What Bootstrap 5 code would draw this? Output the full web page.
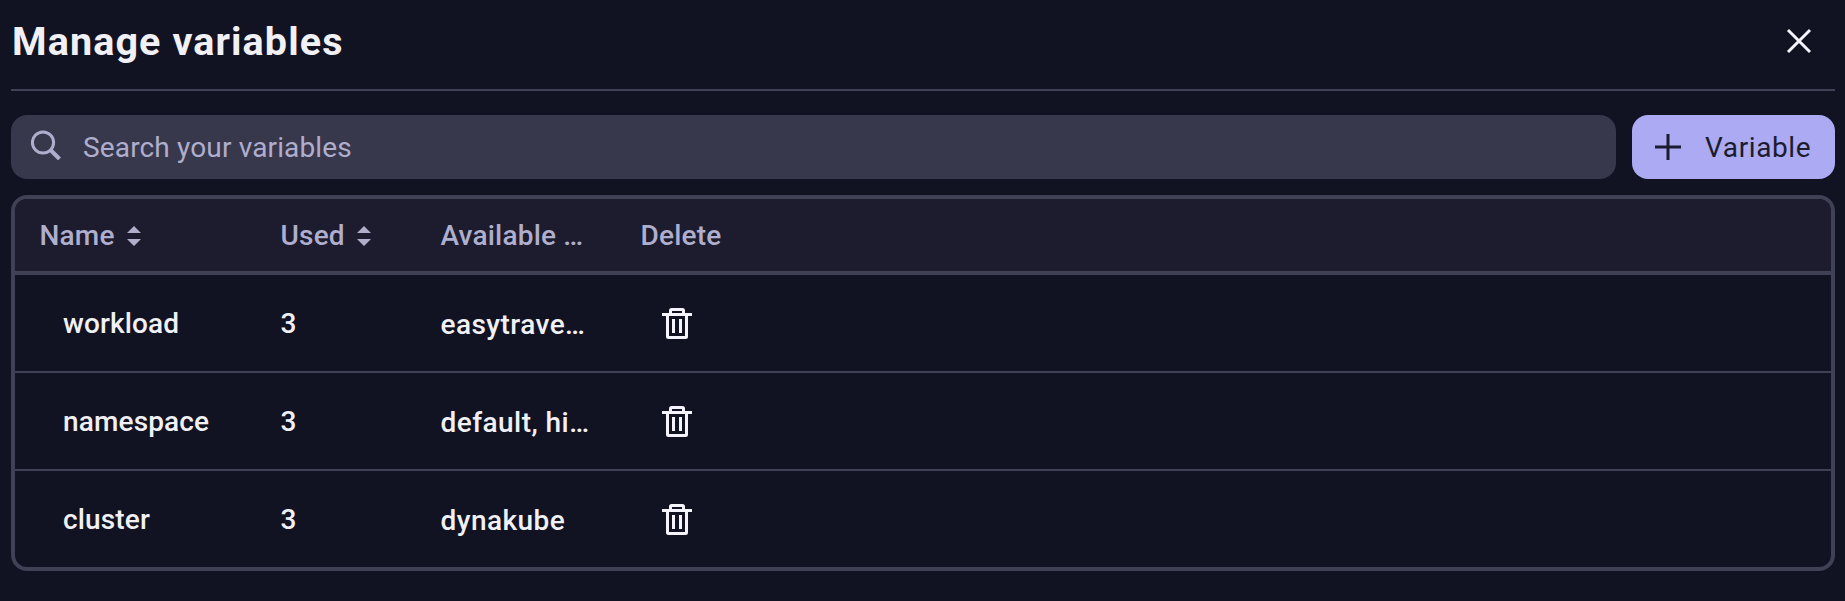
<!doctype html>
<html lang="en" data-bs-theme="dark">
<head>
<meta charset="utf-8">
<meta name="viewport" content="width=device-width, initial-scale=1">
<title>Manage variables</title>
<link href="https://cdn.jsdelivr.net/npm/bootstrap@5.3.0/dist/css/bootstrap.min.css" rel="stylesheet">
<style>
  body { background: #111222; color: #f0f0f5; font-family: Roboto, sans-serif; font-size: 28px; line-height: 36px; overflow: hidden; }
  svg { display: block; flex: none; }
  .panel { padding: 0 10px 0 11px; }
  .panel-head { height: 91px; border-bottom: 2px solid #414155; padding: 0 23px 7px 0; }
  .panel-head h1 { color: #f0f0f5; font-size: 39.5px; line-height: 48px; letter-spacing: 1.1px; padding: 2px 0 0 1px; }
  .toolbar { padding: 24px 0 16px; }
  .search { height: 64px; border-radius: 16px; background: #38384c; padding: 0 20px; }
  .search input { color: #b0aecd; font-size: 28px; line-height: 36px; margin: 1px 0 0 22px; letter-spacing: .15px; box-shadow: none; outline: 0; }
  .search input::placeholder { color: #b0aecd; opacity: 1; }
  .btn-add, .btn-add:hover { width: 203px; height: 64px; border-radius: 16px; background: #abaaf2; color: #1b1c2e; font-size: 28px; line-height: 36px; padding: 0 0 0 20px; letter-spacing: .6px; border: 0; }
  .btn-add span { margin: 1px 0 0 21px; }
  .grid-frame { border: 4px solid #414155; border-radius: 16px; }
  .vars { table-layout: fixed; border-collapse: separate; border-spacing: 0; font-weight: 500; --bs-table-bg: transparent; }
  .vars th, .vars td { padding: 2px 0 0 25.5px; vertical-align: middle; white-space: nowrap; border: 0; }
  .vars th { height: 76px; background: #1c1c2e; color: #b0aecd; font-weight: 500; border-bottom: 4px solid #414155; letter-spacing: .2px; }
  .vars th:first-child { padding-left: 24.5px; }
  .vars td { height: 98px; color: #f0f0f5; border-bottom: 2px solid #414155; letter-spacing: .15px; }
  .vars tr:last-child td { height: 96px; border-bottom: 0; }
  .vars td:first-child { padding-left: 48px; }
  .vars .values { padding-top: 4px; letter-spacing: .45px; }
  .vars td:last-child { padding: 0 0 0 24px; }
  .vars .btn { display: block; padding: 0 0 0 22px; border: 0; color: #f5f3fb; }
</style>
</head>
<body>
<svg width="0" height="0" class="position-absolute" aria-hidden="true">
  <symbol id="sort" viewBox="0 0 14 20"><path d="M0 7 7 0l7 7zM0 13h14l-7 7z" fill="currentColor"/></symbol>
  <symbol id="trash" viewBox="0 0 32 32"><path d="M1 7.500h30M9.500 7V3.500a1 1 0 0 1 1-1h11a1 1 0 0 1 1 1V7M6.500 8v21.500a1 1 0 0 0 1 1h17a1 1 0 0 0 1-1V8M12.500 12v14M19.500 12v14" fill="none" stroke="currentColor" stroke-width="3"/></symbol>
</svg>
<main class="panel">
  <header class="panel-head d-flex align-items-center justify-content-between">
    <h1 class="fw-bold m-0">Manage variables</h1>
    <button type="button" class="btn border-0 p-0 text-white" aria-label="Close">
      <svg width="26" height="26" viewBox="0 0 26 26"><path d="M2 2l22 22M24 2l-22 22" stroke="#f5f3fb" stroke-width="3"/></svg>
    </button>
  </header>
  <div class="toolbar d-flex gap-3">
    <label class="search d-flex align-items-center flex-grow-1">
      <svg width="30" height="30" viewBox="0 0 30 30" fill="none" stroke="#b0aecd" class="mb-1"><circle cx="12" cy="12.500" r="10.600" stroke-width="3"/><path d="M19.500 20l9 9" stroke-width="4"/></svg>
      <input type="text" class="flex-grow-1 border-0 bg-transparent p-0" placeholder="Search your variables">
    </label>
    <button type="button" class="btn btn-add d-flex align-items-center">
      <svg width="32" height="32" viewBox="0 0 32 32" stroke="#1b1c2e" stroke-width="3"><path d="M3 16h26M16 3v26"/></svg>
      <span>Variable</span>
    </button>
  </div>
  <div class="grid-frame overflow-hidden">
    <table class="table vars m-0">
      <colgroup><col style="width:240px"><col style="width:160px"><col style="width:200px"><col></colgroup>
      <thead>
        <tr>
          <th><div class="d-flex align-items-center"><span>Name</span><svg width="14" height="20" style="margin-left:12.5px;margin-top:-1px"><use href="#sort"/></svg></div></th>
          <th><div class="d-flex align-items-center"><span>Used</span><svg width="14" height="20" style="margin-left:12px;margin-top:-1px"><use href="#sort"/></svg></div></th>
          <th>Available …</th>
          <th>Delete</th>
        </tr>
      </thead>
      <tbody>
        <tr><td>workload</td><td>3</td><td class="values">easytrave…</td><td><button type="button" class="btn" aria-label="Delete workload"><svg width="32" height="32"><use href="#trash"/></svg></button></td></tr>
        <tr><td>namespace</td><td>3</td><td class="values">default, hi…</td><td><button type="button" class="btn" aria-label="Delete namespace"><svg width="32" height="32"><use href="#trash"/></svg></button></td></tr>
        <tr><td>cluster</td><td>3</td><td class="values">dynakube</td><td><button type="button" class="btn" aria-label="Delete cluster"><svg width="32" height="32"><use href="#trash"/></svg></button></td></tr>
      </tbody>
    </table>
  </div>
</main>
<script src="https://cdn.jsdelivr.net/npm/bootstrap@5.3.0/dist/js/bootstrap.bundle.min.js"></script>
</body>
</html>
